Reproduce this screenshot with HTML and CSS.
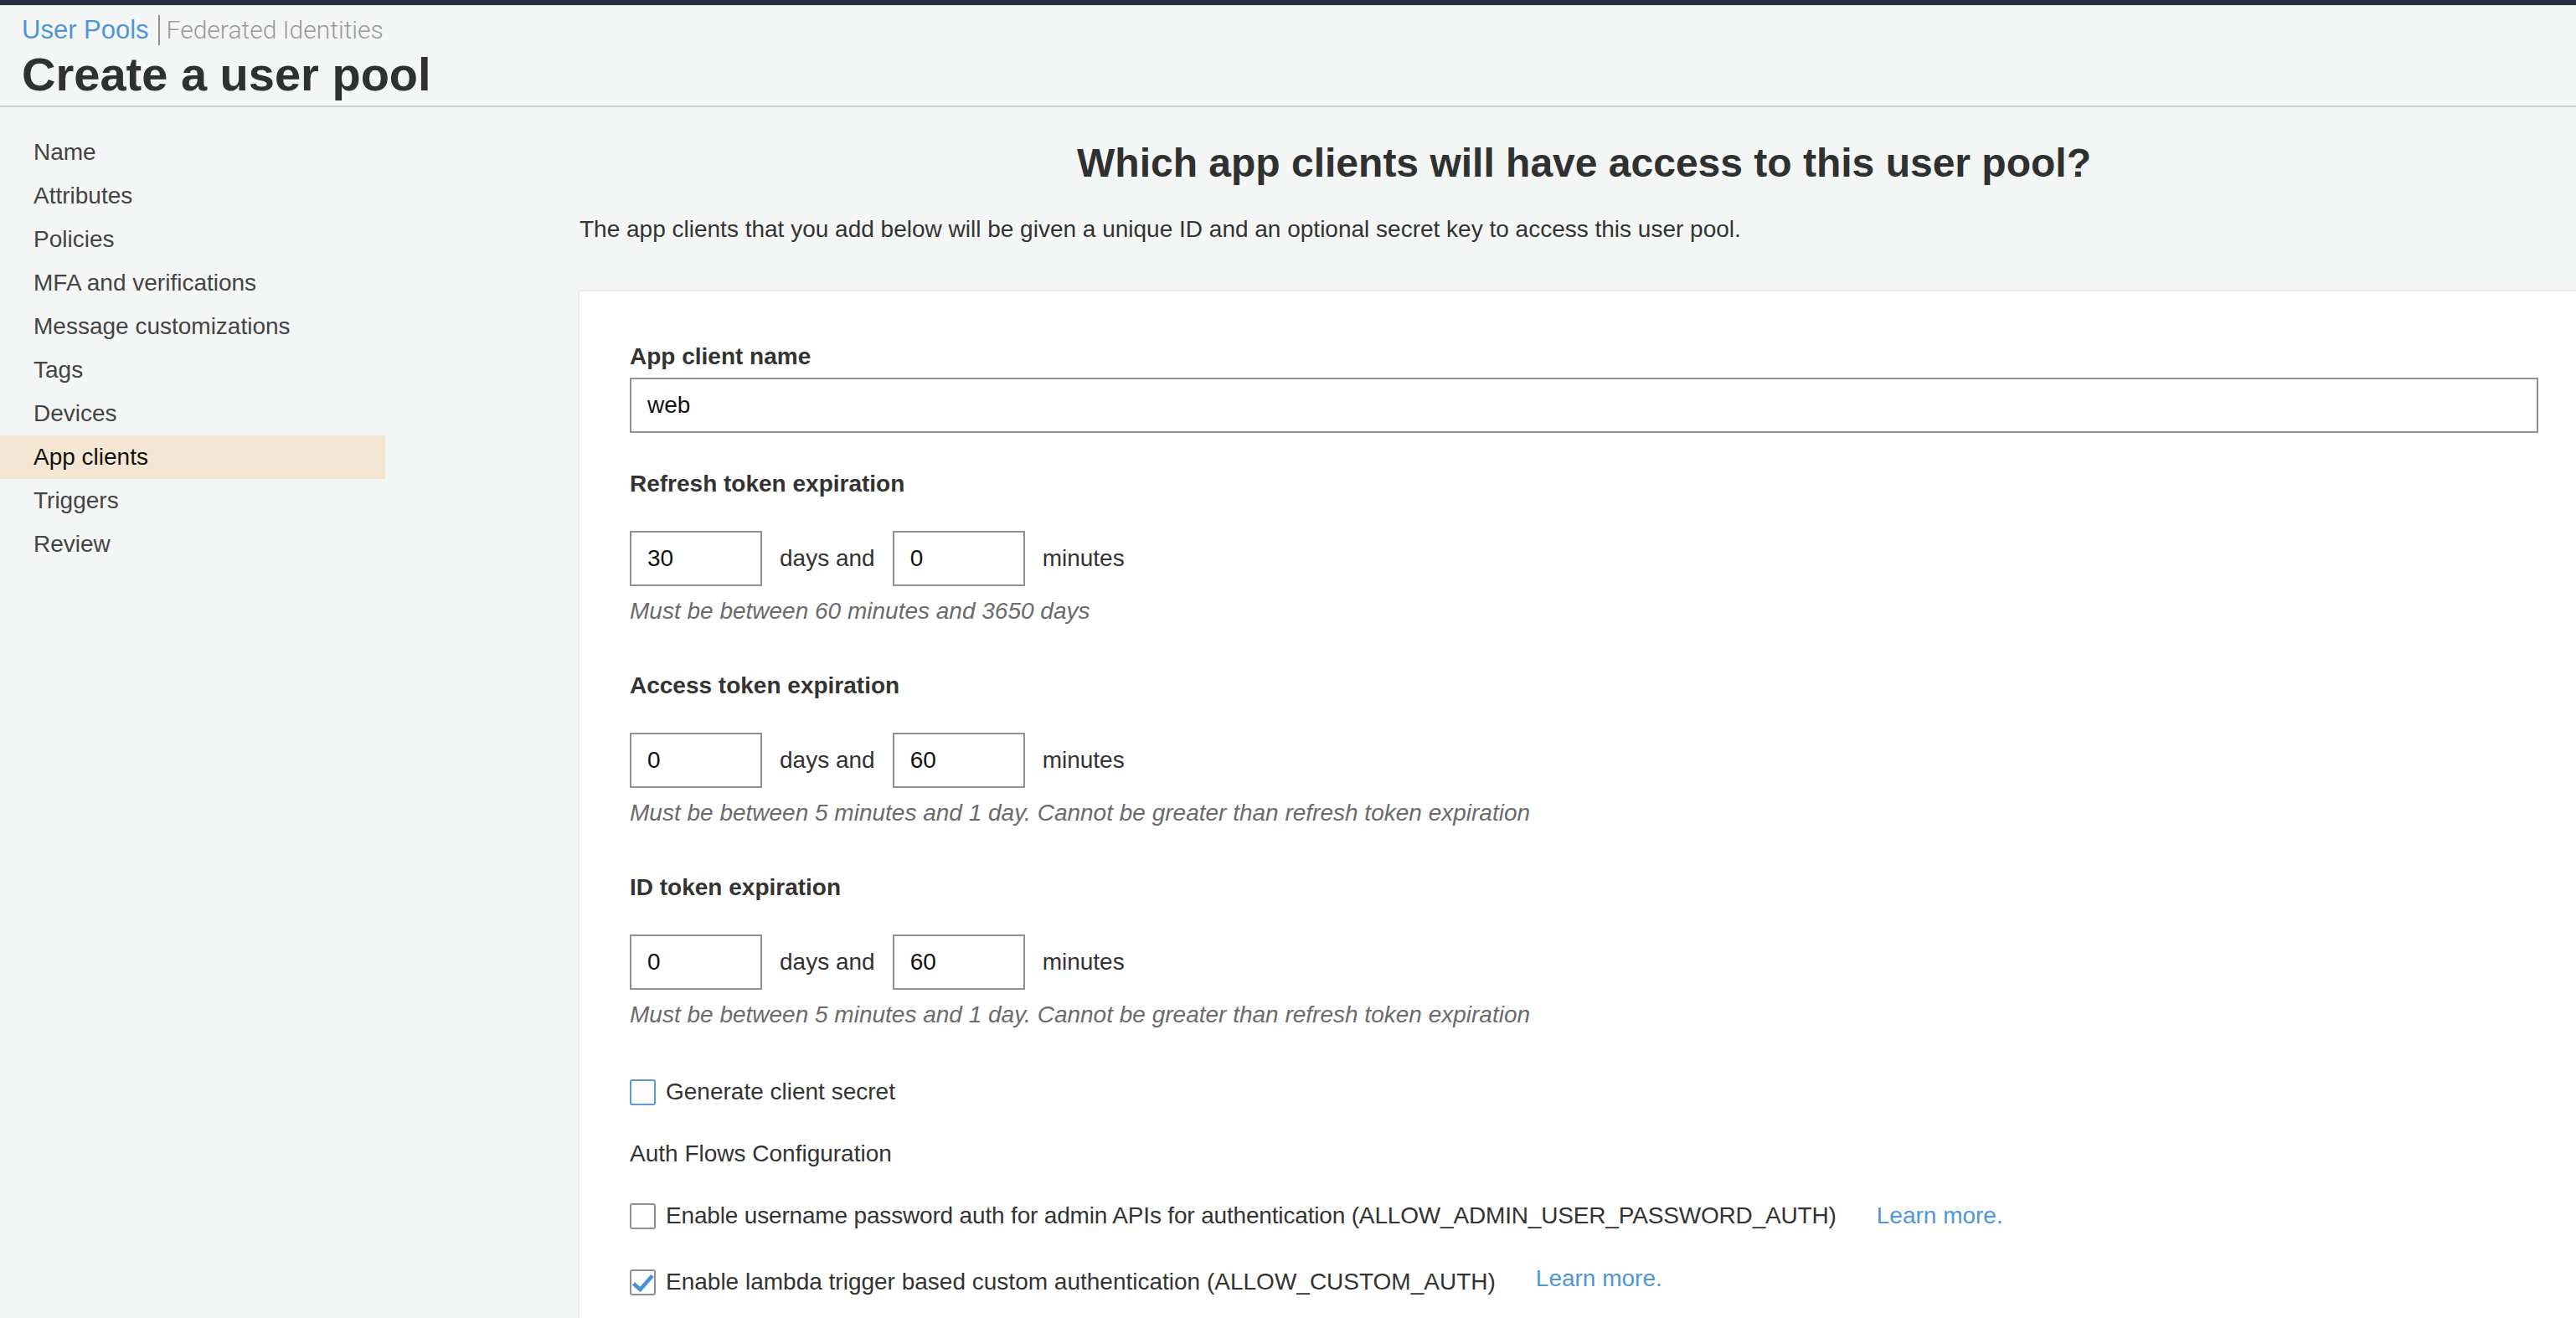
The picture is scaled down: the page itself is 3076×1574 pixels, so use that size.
FILE: index.html
```html
<!DOCTYPE html>
<html lang="en">
<head>
<meta charset="utf-8">
<title>Create a user pool</title>
<link rel="stylesheet" href="styles.css">
</head>
<body>
<div class="page">
  <div class="topbar"></div>
  <header class="header">
    <div class="crumbs">
      <a class="crumb-active" href="#">User Pools</a><span class="crumb-sep"></span><a class="crumb" href="#">Federated Identities</a>
    </div>
    <h1 class="title">Create a user pool</h1>
  </header>
  <div class="layout">
    <nav class="sidebar">
      <div class="nav-item">Name</div>
      <div class="nav-item">Attributes</div>
      <div class="nav-item">Policies</div>
      <div class="nav-item">MFA and verifications</div>
      <div class="nav-item">Message customizations</div>
      <div class="nav-item">Tags</div>
      <div class="nav-item">Devices</div>
      <div class="nav-item nav-item-active">App clients</div>
      <div class="nav-item">Triggers</div>
      <div class="nav-item">Review</div>
    </nav>
    <main class="main">
      <h2 class="question">Which app clients will have access to this user pool?</h2>
      <p class="intro">The app clients that you add below will be given a unique ID and an optional secret key to access this user pool.</p>
      <section class="card">
        <div class="label">App client name</div>
        <div class="text-input wide">web</div>

        <div class="token-section">
          <div class="label">Refresh token expiration</div>
          <div class="token-row">
            <div class="text-input small">30</div>
            <span>days and</span>
            <div class="text-input small">0</div>
            <span>minutes</span>
          </div>
          <div class="hint">Must be between 60 minutes and 3650 days</div>
        </div>

        <div class="token-section">
          <div class="label">Access token expiration</div>
          <div class="token-row">
            <div class="text-input small">0</div>
            <span>days and</span>
            <div class="text-input small">60</div>
            <span>minutes</span>
          </div>
          <div class="hint">Must be between 5 minutes and 1 day. Cannot be greater than refresh token expiration</div>
        </div>

        <div class="token-section">
          <div class="label">ID token expiration</div>
          <div class="token-row">
            <div class="text-input small">0</div>
            <span>days and</span>
            <div class="text-input small">60</div>
            <span>minutes</span>
          </div>
          <div class="hint">Must be between 5 minutes and 1 day. Cannot be greater than refresh token expiration</div>
        </div>

        <div class="check-row first-check">
          <span class="checkbox focused"></span>
          <span>Generate client secret</span>
        </div>

        <div class="plain-heading">Auth Flows Configuration</div>

        <div class="check-row flow-row">
          <span class="checkbox"></span>
          <span class="flow-text-tight">Enable username password auth for admin APIs for authentication (ALLOW_ADMIN_USER_PASSWORD_AUTH)</span>
          <a class="learn" href="#">Learn more.</a>
        </div>

        <div class="check-row flow-row second-flow">
          <span class="checkbox checked">
            <svg width="31" height="31" viewBox="0 0 31 31" aria-hidden="true"><polyline points="4.5,17 12.5,24 27,7.5" fill="none" stroke="#4a90d6" stroke-width="4.6" stroke-linejoin="miter"/></svg>
          </span>
          <span>Enable lambda trigger based custom authentication (ALLOW_CUSTOM_AUTH)</span>
          <a class="learn learn-up" href="#">Learn more.</a>
        </div>
      </section>
    </main>
  </div>
</div>
</body>
</html>
```

FILE: styles.css
```css
html, body {
  margin: 0;
  padding: 0;
}

body {
  background: #f4f6f5;
  font-family: "Liberation Sans", Arial, Helvetica, sans-serif;
  font-size: 28px;
  color: #333;
}

.page {
  width: 3076px;
  height: 1574px;
  overflow: hidden;
}

.topbar {
  height: 6px;
  background: #232f3e;
  border-bottom: 1px solid #dfe2e2;
}

.header {
  padding: 11px 0 7px 26px;
  border-bottom: 2px solid #cfd1d1;
}

.crumbs {
  display: flex;
  align-items: center;
  height: 36px;
  font-size: 31px;
  line-height: 36px;
}

.crumbs a {
  text-decoration: none;
}

.crumb-active {
  color: #4f96d8;
}

.crumb-sep {
  display: inline-block;
  width: 2px;
  height: 36px;
  background: #8f8f8f;
  margin: 0 8px 0 11px;
}

.crumb {
  color: #9a9a9a;
  font-family: Roboto, "Liberation Sans", sans-serif;
  font-weight: 300;
  font-size: 30px;
}

.title {
  margin: 5px 0 0;
  font-size: 56px;
  line-height: 60px;
  font-weight: bold;
  color: #2f3030;
}

.layout {
  display: grid;
  grid-template-columns: 692px 2399px;
}

.sidebar {
  padding-top: 28px;
}

.nav-item {
  width: 420px;
  height: 52px;
  line-height: 52px;
  padding-left: 40px;
  color: #444;
}

.nav-item-active {
  background: #f5e6d3;
  color: #111;
}

.main {
  padding-top: 39px;
}

.question {
  margin: 0;
  text-align: center;
  font-size: 48px;
  line-height: 56px;
  font-weight: bold;
  color: #2f3030;
}

.intro {
  margin: 33px 0 0;
  line-height: 36px;
  color: #333;
}

.card {
  margin-top: 56px;
  background: #fff;
  border-radius: 2px;
  box-shadow: 0 0 4px rgba(0, 0, 0, 0.12);
  padding: 60px 60px 80px;
  min-height: 1400px;
}

.label {
  font-weight: bold;
  line-height: 36px;
  color: #333;
}

.text-input {
  box-sizing: border-box;
  height: 66px;
  border: 2px solid #8d9196;
  padding: 0 19px;
  line-height: 62px;
  color: #111;
  background: #fff;
}

.wide {
  margin-top: 7px;
  width: 100%;
}

.small {
  width: 158px;
}

.token-section {
  margin-top: 43px;
}

.token-section + .token-section {
  margin-top: 53px;
}

.token-row {
  display: flex;
  align-items: center;
  gap: 21px;
  margin-top: 38px;
  line-height: 36px;
  color: #333;
}

.hint {
  margin-top: 12px;
  line-height: 36px;
  font-style: italic;
  color: #6b6b6b;
}

.check-row {
  display: flex;
  align-items: center;
  line-height: 36px;
  color: #333;
}

.first-check {
  margin-top: 56px;
}

.checkbox {
  box-sizing: border-box;
  flex: none;
  width: 31px;
  height: 31px;
  border: 2px solid #8d9196;
  border-radius: 3px;
  margin-right: 12px;
  position: relative;
  background: #fff;
}

.checkbox.focused {
  border-color: #5b9bd5;
}

.checkbox svg {
  position: absolute;
  left: -2px;
  top: -2px;
}

.plain-heading {
  margin-top: 38px;
  line-height: 36px;
  color: #333;
}

.flow-row {
  margin-top: 38px;
}

.second-flow {
  margin-top: 43px;
}

.flow-text-tight {
  letter-spacing: -0.17px;
}

.learn {
  margin-left: 48px;
  color: #4f96d8;
  text-decoration: none;
}

.learn-up {
  position: relative;
  top: -4px;
}
```
